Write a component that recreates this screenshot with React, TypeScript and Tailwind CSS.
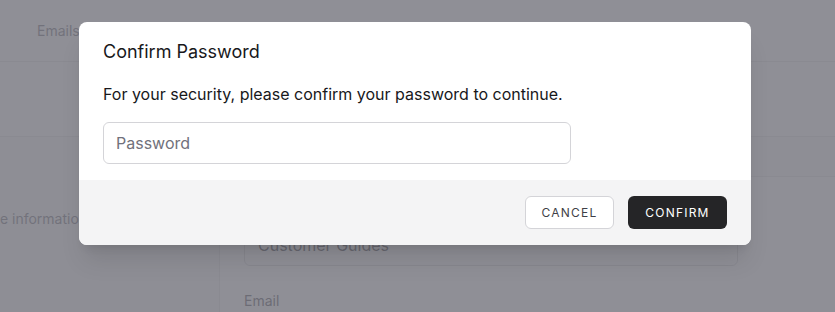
const tabs = ["Emails", "General", "Members", "Billing", "Integrations"];

const PageBehind = () => {
  return (
    <div className="flex h-full flex-col bg-white">
      <div className="flex h-[62px] items-center gap-8 border-b border-zinc-200 px-[37px] text-sm text-zinc-500">
        {tabs.map((t) => (
          <span key={t}>{t}</span>
        ))}
      </div>
      <div className="h-[75px] shrink-0 border-b border-zinc-200 bg-white"></div>
      <div className="flex flex-1 bg-zinc-50">
        <div className="w-[219px] shrink-0 overflow-hidden pt-[72px]">
          <p className="-ml-[86px] whitespace-nowrap text-sm text-zinc-500">
            Update profile information for this group.
          </p>
        </div>
        <div className="mt-[39px] flex-1 border-l border-t border-zinc-200 bg-white px-6 pt-[47px]">
          <div className="w-[494px] rounded-md border border-zinc-300 px-[13px] py-2 text-base text-zinc-700">
            Customer Guides
          </div>
          <p className="mt-[25px] text-sm text-zinc-600">Email</p>
        </div>
      </div>
    </div>
  );
};

const App = () => {
  return (
    <div className="relative h-[312px] w-[835px] overflow-hidden font-['Inter',sans-serif]">
      <PageBehind />
      <div className="absolute inset-0 flex items-start justify-center bg-[rgba(115,115,124,0.8)] pr-[5px] pt-[22px]">
        <div className="w-[672px] overflow-hidden rounded-lg bg-white shadow-xl">
          <div className="px-6 pb-4 pt-4">
            <h2 className="text-lg text-zinc-900">Confirm Password</h2>
            <p className="mt-4 text-base text-zinc-900">
              For your security, please confirm your password to continue.
            </p>
            <input
              type="password"
              placeholder="Password"
              className="mt-4 block w-3/4 rounded-md border border-zinc-300 px-3 py-2 text-base leading-6 text-zinc-900 placeholder:text-zinc-500 focus:outline-none"
            />
          </div>
          <div className="flex justify-end gap-[14px] bg-zinc-100 px-6 py-4">
            <button className="w-[89px] rounded-md border border-zinc-300 bg-white py-2 text-xs uppercase leading-[15px] tracking-widest text-zinc-700">
              Cancel
            </button>
            <button className="w-[99px] rounded-md border border-transparent bg-[#252527] py-2 text-xs uppercase leading-[15px] tracking-widest text-white">
              Confirm
            </button>
          </div>
        </div>
      </div>
    </div>
  );
};

export default App;
